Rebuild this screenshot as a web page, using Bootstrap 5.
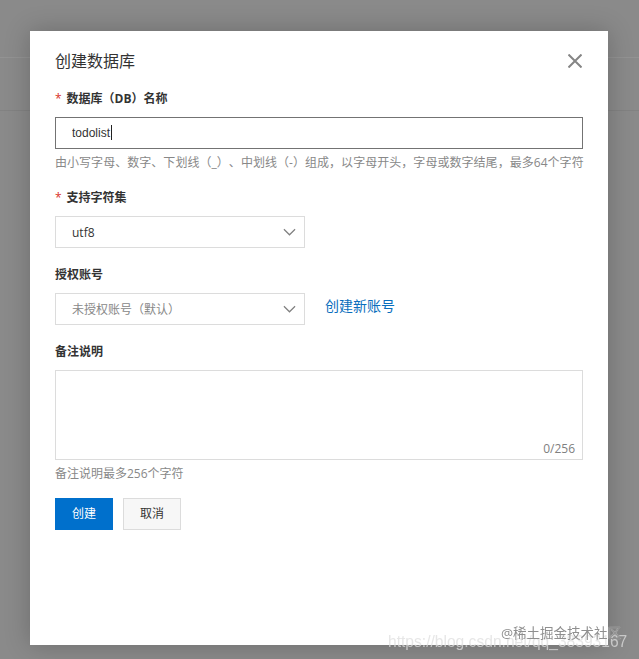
<!DOCTYPE html>
<html lang="zh-CN">

<head>
    <meta charset="UTF-8">
    <meta name="viewport" content="width=device-width, initial-scale=1.0">
    <title>创建数据库</title>
    <link href="https://cdn.jsdelivr.net/npm/bootstrap@5.3.0/dist/css/bootstrap.min.css" rel="stylesheet">
    <style>
        html, body {
            height: 100%;
        }

        body {
            background: #8a8a8a;
            color: #333;
            font-family: "Open Sans", "Noto Sans CJK SC", sans-serif;
            font-size: 12px;
            overflow: hidden;
            text-spacing-trim: space-all;
        }

        .page-back {
            position: relative;
            height: 659px;
            overflow: hidden;
        }

        .back-row {
            height: 53px;
            border-bottom: 1px solid #828282;
        }

        .back-row-first {
            height: 58px;
            border-bottom-color: #939393;
        }

        .db-dialog {
            position: absolute;
            left: 30px;
            top: 31px;
            width: 578px;
            height: 614px;
            padding: 0 25px;
            background: #fff;
            box-shadow: 0 0 24px rgba(0, 0, 0, 0.22);
        }

        .db-title-row {
            height: 59px;
            padding-top: 2px;
        }

        .db-title {
            font-size: 16px;
            font-weight: 400;
            color: #333;
            margin: 0;
        }

        .db-close {
            border: 0;
            background: none;
            padding: 0 1px 2px 0;
            line-height: 0;
        }

        .db-label {
            display: block;
            height: 18px;
            line-height: 18px;
            margin: 0 0 9px;
            font-weight: 700;
            color: #333;
        }

        .req {
            color: #d93026;
            margin-right: 5px;
            font-weight: 400;
        }

        .db-group {
            margin-bottom: 18px;
        }

        .db-group-first {
            margin-bottom: 17px;
        }

        .db-input.form-control,
        .db-select.form-select,
        .db-note.form-control {
            border-radius: 0;
            font-size: 12px;
            color: #333;
            box-shadow: none;
        }

        .db-input-wrap {
            position: relative;
        }

        .db-input.form-control {
            height: 32px;
            padding: 0 16px;
            border: 1px solid #737373;
            font-family: "Liberation Sans", sans-serif;
        }

        .db-caret {
            position: absolute;
            left: 56px;
            top: 8px;
            width: 1px;
            height: 15px;
            background: #222;
        }

        .db-select.form-select {
            width: 250px;
            height: 32px;
            padding: 2px 32px 0 16px;
            border: 1px solid #dcdcdc;
            background-image: url("data:image/svg+xml,%3csvg xmlns='http://www.w3.org/2000/svg' viewBox='0 0 14 8'%3e%3cpath fill='none' stroke='%23808080' stroke-width='1.3' d='M1 1l6 6 6-6'/%3e%3c/svg%3e");
            background-position: right 8px center;
            background-size: 13px 8px;
        }

        .db-select.is-empty {
            color: #888;
        }

        .db-link {
            color: #0a6ebd;
            font-size: 14px;
            text-decoration: none;
            margin-left: 20px;
            position: relative;
            top: -4px;
        }

        .db-note-wrap {
            position: relative;
        }

        .db-note.form-control {
            display: block;
            height: 90px;
            border: 1px solid #dcdcdc;
            resize: none;
        }

        .db-count {
            position: absolute;
            right: 8px;
            bottom: 2px;
            color: #808080;
        }

        .db-hint {
            height: 18px;
            line-height: 18px;
            margin-top: 5px;
            color: #888;
            white-space: nowrap;
        }

        .db-hint-long {
            letter-spacing: 0.04px;
        }

        .db-actions {
            gap: 10px;
            margin-top: 15px;
        }

        .db-btn.btn {
            width: 58px;
            height: 32px;
            padding: 0;
            border-radius: 0;
            font-size: 12px;
        }

        .db-btn-main.btn {
            background: #0070cc;
            border-color: #0070cc;
            color: #fff;
        }

        .db-btn-plain.btn {
            background: #f7f7f7;
            border-color: #dcdcdc;
            color: #333;
        }

        .mark-csdn,
        .mark-juejin {
            position: absolute;
            white-space: nowrap;
            pointer-events: none;
        }

        .mark-csdn {
            left: 388px;
            top: 630px;
            font-family: "Liberation Sans", sans-serif;
            font-size: 15.6px;
            color: rgba(222, 222, 222, 0.75);
            filter: blur(0.6px);
        }

        .mark-juejin {
            left: 501px;
            top: 623px;
            font-size: 13.5px;
            color: #8f8f8f;
            text-shadow: 0 0 1px rgba(255, 255, 255, 0.9);
            filter: blur(0.3px);
        }
    </style>
</head>

<body>
    <div class="page-back">
        <div class="back-row back-row-first"></div>
        <div class="back-row"></div>

        <div class="db-dialog">
            <div class="db-title-row d-flex justify-content-between align-items-center">
                <h5 class="db-title">创建数据库</h5>
                <button type="button" class="db-close" aria-label="关闭">
                    <svg width="14" height="14" viewBox="0 0 14 14">
                        <path d="M0.5 0.5l13 13M13.5 0.5l-13 13" stroke="#858585" stroke-width="2" fill="none" />
                    </svg>
                </button>
            </div>

            <form>
                <div class="db-group db-group-first">
                    <label class="db-label"><span class="req">*</span>数据库（DB）名称</label>
                    <div class="db-input-wrap">
                        <input type="text" class="db-input form-control" value="todolist">
                        <span class="db-caret"></span>
                    </div>
                    <div class="db-hint db-hint-long">由小写字母、数字、下划线（_）、中划线（-）组成，以字母开头，字母或数字结尾，最多64个字符</div>
                </div>
                <div class="db-group">
                    <label class="db-label"><span class="req">*</span>支持字符集</label>
                    <select class="db-select form-select">
                        <option>utf8</option>
                    </select>
                </div>
                <div class="db-group">
                    <label class="db-label">授权账号</label>
                    <div class="d-flex align-items-center">
                        <select class="db-select is-empty form-select">
                            <option>未授权账号（默认）</option>
                        </select>
                        <a href="#" class="db-link">创建新账号</a>
                    </div>
                </div>
                <div class="db-group mb-0">
                    <label class="db-label">备注说明</label>
                    <div class="db-note-wrap">
                        <textarea class="db-note form-control"></textarea>
                        <span class="db-count">0/256</span>
                    </div>
                    <div class="db-hint">备注说明最多256个字符</div>
                </div>
                <div class="d-flex db-actions">
                    <button type="button" class="db-btn db-btn-main btn">创建</button>
                    <button type="button" class="db-btn db-btn-plain btn">取消</button>
                </div>
            </form>
        </div>

        <div class="mark-csdn">https://blog.csdn.net/qq_38393167</div>
        <div class="mark-juejin">@稀土掘金技术社区</div>
    </div>
    <script src="https://cdn.jsdelivr.net/npm/bootstrap@5.3.0/dist/js/bootstrap.bundle.min.js"></script>
</body>

</html>
